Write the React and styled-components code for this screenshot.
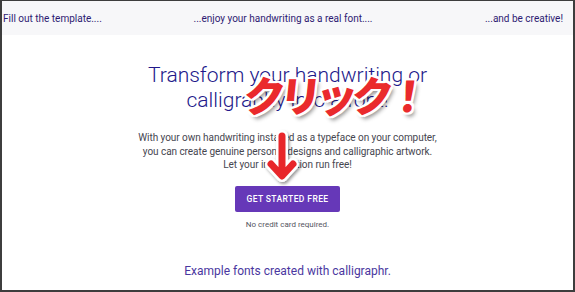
import React from "react";
import styled, { createGlobalStyle } from "styled-components";

const Global = createGlobalStyle`
  html, body { margin: 0; padding: 0; background: #ffffff; }
  body { font-family: Roboto, "Noto Sans", sans-serif; }
`;

const Frame = styled.div`
  position: relative;
  box-sizing: border-box;
  width: 575px;
  height: 292px;
  border-top: 1px solid #3d3d3d;
  border-left: 2px solid #3d3d3d;
  border-right: 2px solid #3d3d3d;
  border-bottom: 2px solid #3d3d3d;
  background: #fff;
  overflow: hidden;
`;

const TopBar = styled.div`
  display: grid;
  grid-template-columns: 1fr auto 1fr;
  align-items: center;
  height: 34px;
  padding: 0 10px 0 1px;
  background: #f7f7f9;
  font-size: 10px;
  color: #2e1a72;
`;

const BarItem = styled.span`
  justify-self: ${(p) => p.$align || "center"};
  white-space: nowrap;
`;

const Hero = styled.main`
  display: flex;
  flex-direction: column;
  align-items: center;
  padding-top: 28px;
  text-align: center;
`;

const Title = styled.h1`
  margin: 0;
  font-size: 21px;
  line-height: 25px;
  font-weight: 300;
  color: #22188a;
`;

const Lead = styled.p`
  margin: 18px 0 0;
  font-size: 10px;
  line-height: 13.5px;
  letter-spacing: -0.05px;
  color: #46464f;
`;

const CTA = styled.button`
  margin-top: 14px;
  width: 105px;
  height: 26px;
  border: none;
  border-radius: 2px;
  background: #6638b8;
  color: #fff;
  font-family: inherit;
  font-size: 8.5px;
  font-weight: 500;
  letter-spacing: 0.4px;
  padding: 0;
`;

const Note = styled.div`
  margin-top: 8px;
  font-size: 8px;
  color: #55555f;
`;

const Examples = styled.h2`
  margin: 35px 0 0;
  font-size: 12px;
  font-weight: 400;
  color: #4a37a0;
`;

const Callout = styled.div`
  position: absolute;
  left: 242px;
  top: 72px;
  font-family: "Noto Sans CJK JP", sans-serif;
  font-weight: 900;
  font-size: 42px;
  letter-spacing: -6px;
  color: #ea2a2c;
  text-shadow:
    2px 0 0 #fff, -2px 0 0 #fff, 0 2px 0 #fff, 0 -2px 0 #fff,
    2px 2px 0 #fff, -2px -2px 0 #fff, 2px -2px 0 #fff, -2px 2px 0 #fff,
    3px 4px 4px rgba(0, 0, 0, 0.45);
  transform: skewX(-6deg);
  white-space: nowrap;
  line-height: 1;
`;

const Arrow = styled.svg`
  position: absolute;
  left: 264px;
  top: 131px;
  overflow: visible;
`;

export default function App() {
  return (
    <>
      <Global />
      <Frame>
        <TopBar>
          <BarItem $align="start">Fill out the template....</BarItem>
          <BarItem>...enjoy your handwriting as a real font....</BarItem>
          <BarItem $align="end">...and be creative!</BarItem>
        </TopBar>
        <Hero>
          <Title>
            Transform your handwriting or
            <br />
            calligraphy into a font!
          </Title>
          <Lead>
            With your own handwriting installed as a typeface on your computer,
            <br />
            you can create genuine personal designs and calligraphic artwork.
            <br />
            Let your imagination run free!
          </Lead>
          <CTA>GET STARTED FREE</CTA>
          <Note>No credit card required.</Note>
          <Examples>Example fonts created with calligraphr.</Examples>
        </Hero>
        <Callout>クリック！</Callout>
        <Arrow width="34" height="54" viewBox="0 0 34 54">
          <defs>
            <filter id="sh" x="-50%" y="-50%" width="200%" height="200%">
              <feDropShadow dx="1.5" dy="2" stdDeviation="1.5" floodColor="#000" floodOpacity="0.4" />
            </filter>
          </defs>
          <g filter="url(#sh)">
            <path
              d="M16 4 L16 42 M5 32 L16 44 L27 32"
              fill="none"
              stroke="#fff"
              strokeWidth="12"
              strokeLinecap="round"
              strokeLinejoin="round"
            />
            <path
              d="M16 4 L16 42 M5 32 L16 44 L27 32"
              fill="none"
              stroke="#e8282b"
              strokeWidth="7"
              strokeLinecap="round"
              strokeLinejoin="round"
            />
          </g>
        </Arrow>
      </Frame>
    </>
  );
}
